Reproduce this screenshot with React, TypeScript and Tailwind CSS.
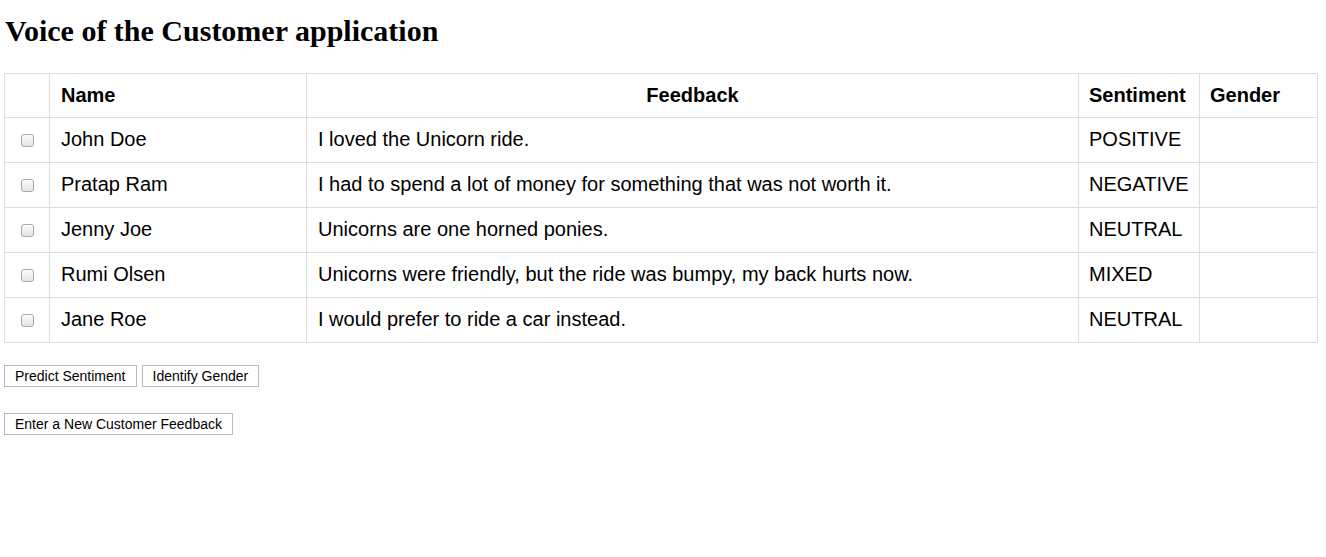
const rows = [
  { name: "John Doe", feedback: "I loved the Unicorn ride.", sentiment: "POSITIVE" },
  { name: "Pratap Ram", feedback: "I had to spend a lot of money for something that was not worth it.", sentiment: "NEGATIVE" },
  { name: "Jenny Joe", feedback: "Unicorns are one horned ponies.", sentiment: "NEUTRAL" },
  { name: "Rumi Olsen", feedback: "Unicorns were friendly, but the ride was bumpy, my back hurts now.", sentiment: "MIXED" },
  { name: "Jane Roe", feedback: "I would prefer to ride a car instead.", sentiment: "NEUTRAL" },
];

function Checkbox() {
  return (
    <span className="inline-block h-[13px] w-[13px] rounded-[3px] border border-[#a9a9a9] bg-gradient-to-b from-[#fcfcfc] to-[#e4e4e4] align-middle" />
  );
}

function Btn({ children }: { children: React.ReactNode }) {
  return (
    <button className="h-[22px] border border-[#b9b9b9] bg-white px-[10px] text-[14px] leading-none text-black">
      {children}
    </button>
  );
}

export default function App() {
  return (
    <div className="min-h-[557px] bg-white px-[4px] pt-[14px] text-black" style={{ fontFamily: '"Liberation Sans", Arial, sans-serif' }}>
      <h1 className="ml-[1px] text-[30px] font-bold leading-[34px]" style={{ fontFamily: '"Liberation Serif", "Times New Roman", serif' }}>
        Voice of the Customer application
      </h1>

      <table className="mt-[25px] w-[1314px] border-collapse text-[20px]">
        <thead>
          <tr className="h-[44px]">
            <th className="w-[45px] border border-[#dddddd]" />
            <th className="w-[257px] border border-[#dddddd] px-[11px] pb-[1px] text-left font-bold">Name</th>
            <th className="w-[772px] border border-[#dddddd] px-[11px] pb-[1px] text-center font-bold">Feedback</th>
            <th className="w-[121px] border border-[#dddddd] px-[10px] pb-[1px] text-left font-bold">Sentiment</th>
            <th className="border border-[#dddddd] px-[10px] pb-[1px] text-left font-bold">Gender</th>
          </tr>
        </thead>
        <tbody>
          {rows.map((r) => (
            <tr key={r.name} className="h-[45px]">
              <td className="border border-[#dddddd] pb-[2px] text-center">
                <Checkbox />
              </td>
              <td className="border border-[#dddddd] px-[11px] pb-[2px]">{r.name}</td>
              <td className="border border-[#dddddd] px-[11px] pb-[2px]">{r.feedback}</td>
              <td className="border border-[#dddddd] px-[10px] pb-[2px]">{r.sentiment}</td>
              <td className="border border-[#dddddd] px-[10px]" />
            </tr>
          ))}
        </tbody>
      </table>

      <div className="mt-[22px] flex gap-[5px]">
        <Btn>Predict Sentiment</Btn>
        <Btn>Identify Gender</Btn>
      </div>
      <div className="mt-[25px]">
        <Btn>Enter a New Customer Feedback</Btn>
      </div>
    </div>
  );
}
